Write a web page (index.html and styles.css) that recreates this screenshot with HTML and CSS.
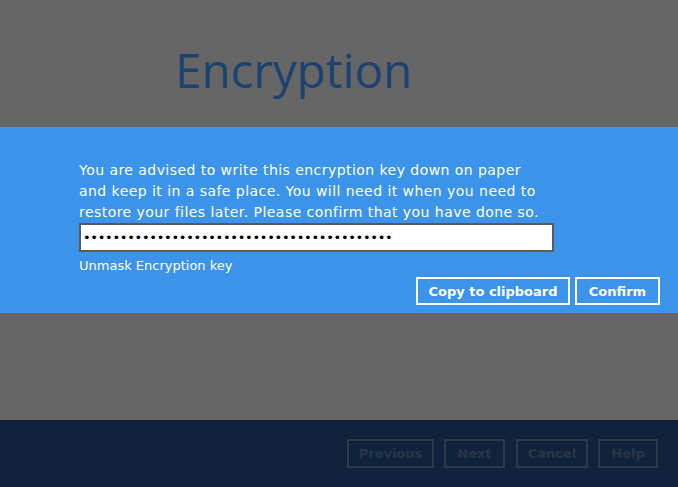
FILE: index.html
```html
<!DOCTYPE html>
<html>
<head>
<meta charset="utf-8">
<link rel="stylesheet" href="styles.css">
</head>
<body>
<div class="page">
  <header class="top">
    <h1 class="title">Encryption</h1>
  </header>
  <section class="dialog">
    <p class="msg">You are advised to write this encryption key down on paper<br>and keep it in a safe place. You will need it when you need to<br>restore your files later. Please confirm that you have done so.</p>
    <div class="keybox"><span class="dots">••••••••••••••••••••••••••••••••••••••••••</span></div>
    <div class="unmask">Unmask Encryption key</div>
    <div class="actions">
      <button class="btn copy">Copy to clipboard</button>
      <button class="btn confirm">Confirm</button>
    </div>
  </section>
  <div class="spacer"></div>
  <footer class="footer">
    <button class="fbtn prev">Previous</button>
    <button class="fbtn next">Next</button>
    <button class="fbtn cancel">Cancel</button>
    <button class="fbtn help">Help</button>
  </footer>
</div>
</body>
</html>
```
FILE: styles.css
```css
* { box-sizing: border-box; }
html, body { margin: 0; padding: 0; }
body {
  width: 678px;
  height: 487px;
  overflow: hidden;
  background: #666666;
  font-family: "DejaVu Sans", Verdana, sans-serif;
}
.page {
  display: flex;
  flex-direction: column;
  height: 487px;
}
.top {
  height: 127px;
  padding-left: 175px;
  padding-top: 39px;
}
.title {
  margin: 0;
  font-family: "Open Sans", "Noto Sans", sans-serif;
  font-weight: 400;
  font-size: 47.5px;
  line-height: 62px;
  color: #1c4270;
}
.dialog {
  height: 186px;
  background: #3b94e9;
  padding: 33px 18px 0 79px;
  display: flex;
  flex-direction: column;
}
.msg {
  margin: 0;
  color: #ffffff;
  font-size: 14px;
  letter-spacing: 0.45px;
  line-height: 21px;
}
.keybox {
  margin-top: 0;
  width: 475px;
  height: 29px;
  background: #ffffff;
  border: 2px solid #5a5a5a;
  padding: 0 0 0 2px;
  display: flex;
  align-items: center;
}
.dots {
  font-size: 13px;
  letter-spacing: -0.3px;
  color: #000;
}
.unmask {
  margin-top: 6px;
  color: #ffffff;
  font-size: 13px;
  line-height: 16px;
}
.actions {
  display: flex;
  justify-content: flex-end;
  gap: 5px;
  margin-top: 3px;
}
.btn {
  height: 28px;
  background: transparent;
  border: 2px solid #ffffff;
  color: #ffffff;
  font-family: "DejaVu Sans", Verdana, sans-serif;
  font-weight: bold;
  font-size: 13px;
  padding: 0;
}
.copy { width: 154px; }
.confirm { width: 85px; }
.spacer { flex: 1; }
.footer {
  height: 67px;
  background: #0f233d;
  display: flex;
  justify-content: flex-end;
  align-items: flex-start;
  padding: 19px 20px 0 0;
  gap: 10px;
}
.fbtn {
  height: 29px;
  background: transparent;
  border: 2px solid #2f3a48;
  color: #2b3646;
  font-family: "DejaVu Sans", Verdana, sans-serif;
  font-weight: bold;
  font-size: 13px;
  padding: 0;
}
.prev { width: 87px; }
.next { width: 61px; }
.cancel { width: 72px; margin-left: 1px; }
.help { width: 60px; }
```
